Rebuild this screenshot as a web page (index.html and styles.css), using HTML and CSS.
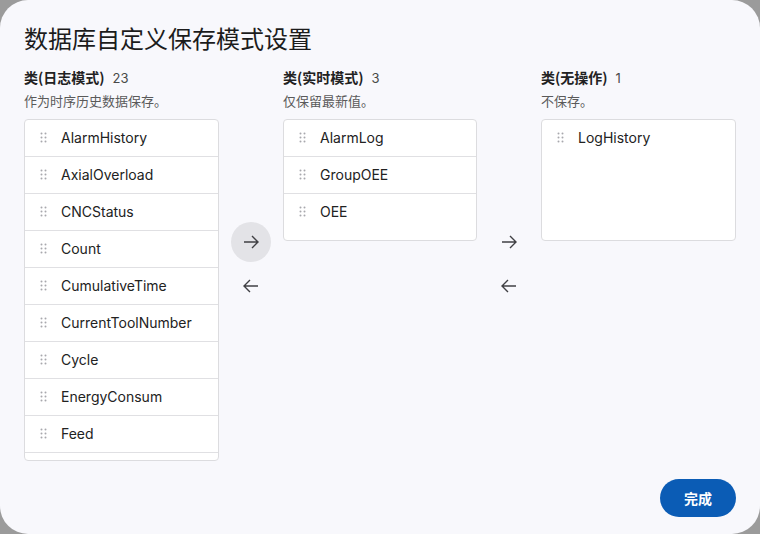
FILE: index.html
```html
<!DOCTYPE html>
<html lang="zh">
<head>
<meta charset="utf-8">
<title>数据库自定义保存模式设置</title>
<link rel="stylesheet" href="styles.css">
</head>
<body>
<div class="dialog">
  <h1 class="title">数据库自定义保存模式设置</h1>
  <div class="columns">
    <section class="col col-first">
      <div class="col-head"><span class="col-name">类(日志模式)</span><span class="col-count">23</span></div>
      <div class="col-desc">作为时序历史数据保存。</div>
      <ul class="list list-scroll">
        <li class="item"><svg class="grip" viewBox="0 0 7 11"><circle cx="1.5" cy="1.5" r="1"/><circle cx="5.5" cy="1.5" r="1"/><circle cx="1.5" cy="5.5" r="1"/><circle cx="5.5" cy="5.5" r="1"/><circle cx="1.5" cy="9.5" r="1"/><circle cx="5.5" cy="9.5" r="1"/></svg><span>AlarmHistory</span></li>
        <li class="item"><svg class="grip" viewBox="0 0 7 11"><circle cx="1.5" cy="1.5" r="1"/><circle cx="5.5" cy="1.5" r="1"/><circle cx="1.5" cy="5.5" r="1"/><circle cx="5.5" cy="5.5" r="1"/><circle cx="1.5" cy="9.5" r="1"/><circle cx="5.5" cy="9.5" r="1"/></svg><span>AxialOverload</span></li>
        <li class="item"><svg class="grip" viewBox="0 0 7 11"><circle cx="1.5" cy="1.5" r="1"/><circle cx="5.5" cy="1.5" r="1"/><circle cx="1.5" cy="5.5" r="1"/><circle cx="5.5" cy="5.5" r="1"/><circle cx="1.5" cy="9.5" r="1"/><circle cx="5.5" cy="9.5" r="1"/></svg><span>CNCStatus</span></li>
        <li class="item"><svg class="grip" viewBox="0 0 7 11"><circle cx="1.5" cy="1.5" r="1"/><circle cx="5.5" cy="1.5" r="1"/><circle cx="1.5" cy="5.5" r="1"/><circle cx="5.5" cy="5.5" r="1"/><circle cx="1.5" cy="9.5" r="1"/><circle cx="5.5" cy="9.5" r="1"/></svg><span>Count</span></li>
        <li class="item"><svg class="grip" viewBox="0 0 7 11"><circle cx="1.5" cy="1.5" r="1"/><circle cx="5.5" cy="1.5" r="1"/><circle cx="1.5" cy="5.5" r="1"/><circle cx="5.5" cy="5.5" r="1"/><circle cx="1.5" cy="9.5" r="1"/><circle cx="5.5" cy="9.5" r="1"/></svg><span>CumulativeTime</span></li>
        <li class="item"><svg class="grip" viewBox="0 0 7 11"><circle cx="1.5" cy="1.5" r="1"/><circle cx="5.5" cy="1.5" r="1"/><circle cx="1.5" cy="5.5" r="1"/><circle cx="5.5" cy="5.5" r="1"/><circle cx="1.5" cy="9.5" r="1"/><circle cx="5.5" cy="9.5" r="1"/></svg><span>CurrentToolNumber</span></li>
        <li class="item"><svg class="grip" viewBox="0 0 7 11"><circle cx="1.5" cy="1.5" r="1"/><circle cx="5.5" cy="1.5" r="1"/><circle cx="1.5" cy="5.5" r="1"/><circle cx="5.5" cy="5.5" r="1"/><circle cx="1.5" cy="9.5" r="1"/><circle cx="5.5" cy="9.5" r="1"/></svg><span>Cycle</span></li>
        <li class="item"><svg class="grip" viewBox="0 0 7 11"><circle cx="1.5" cy="1.5" r="1"/><circle cx="5.5" cy="1.5" r="1"/><circle cx="1.5" cy="5.5" r="1"/><circle cx="5.5" cy="5.5" r="1"/><circle cx="1.5" cy="9.5" r="1"/><circle cx="5.5" cy="9.5" r="1"/></svg><span>EnergyConsum</span></li>
        <li class="item"><svg class="grip" viewBox="0 0 7 11"><circle cx="1.5" cy="1.5" r="1"/><circle cx="5.5" cy="1.5" r="1"/><circle cx="1.5" cy="5.5" r="1"/><circle cx="5.5" cy="5.5" r="1"/><circle cx="1.5" cy="9.5" r="1"/><circle cx="5.5" cy="9.5" r="1"/></svg><span>Feed</span></li>
        <li class="item item-clipped"></li>
      </ul>
    </section>
    <div class="arrows">
      <button class="arrow arrow-active" aria-label="move right"><svg viewBox="0 0 18 18"><path d="M2 9H16M10 3L16 9L10 15"/></svg></button>
      <button class="arrow" aria-label="move left"><svg viewBox="0 0 18 18"><path d="M16 9H2M8 3L2 9L8 15"/></svg></button>
    </div>
    <section class="col">
      <div class="col-head"><span class="col-name">类(实时模式)</span><span class="col-count">3</span></div>
      <div class="col-desc">仅保留最新值。</div>
      <ul class="list">
        <li class="item"><svg class="grip" viewBox="0 0 7 11"><circle cx="1.5" cy="1.5" r="1"/><circle cx="5.5" cy="1.5" r="1"/><circle cx="1.5" cy="5.5" r="1"/><circle cx="5.5" cy="5.5" r="1"/><circle cx="1.5" cy="9.5" r="1"/><circle cx="5.5" cy="9.5" r="1"/></svg><span>AlarmLog</span></li>
        <li class="item"><svg class="grip" viewBox="0 0 7 11"><circle cx="1.5" cy="1.5" r="1"/><circle cx="5.5" cy="1.5" r="1"/><circle cx="1.5" cy="5.5" r="1"/><circle cx="5.5" cy="5.5" r="1"/><circle cx="1.5" cy="9.5" r="1"/><circle cx="5.5" cy="9.5" r="1"/></svg><span>GroupOEE</span></li>
        <li class="item item-last"><svg class="grip" viewBox="0 0 7 11"><circle cx="1.5" cy="1.5" r="1"/><circle cx="5.5" cy="1.5" r="1"/><circle cx="1.5" cy="5.5" r="1"/><circle cx="5.5" cy="5.5" r="1"/><circle cx="1.5" cy="9.5" r="1"/><circle cx="5.5" cy="9.5" r="1"/></svg><span>OEE</span></li>
      </ul>
    </section>
    <div class="arrows">
      <button class="arrow" aria-label="move right"><svg viewBox="0 0 18 18"><path d="M2 9H16M10 3L16 9L10 15"/></svg></button>
      <button class="arrow" aria-label="move left"><svg viewBox="0 0 18 18"><path d="M16 9H2M8 3L2 9L8 15"/></svg></button>
    </div>
    <section class="col col-last">
      <div class="col-head"><span class="col-name">类(无操作)</span><span class="col-count">1</span></div>
      <div class="col-desc">不保存。</div>
      <ul class="list">
        <li class="item item-last"><svg class="grip" viewBox="0 0 7 11"><circle cx="1.5" cy="1.5" r="1"/><circle cx="5.5" cy="1.5" r="1"/><circle cx="1.5" cy="5.5" r="1"/><circle cx="5.5" cy="5.5" r="1"/><circle cx="1.5" cy="9.5" r="1"/><circle cx="5.5" cy="9.5" r="1"/></svg><span>LogHistory</span></li>
      </ul>
    </section>
  </div>
  <div class="footer">
    <button class="done">完成</button>
  </div>
</div>
</body>
</html>
```

FILE: styles.css
```css
* { box-sizing: border-box; }
html, body {
  margin: 0;
  padding: 0;
  background: #9b9b9b;
}
body {
  font-family: "Inter", "Noto Sans CJK SC", sans-serif;
  color: #1f1f1f;
}
.dialog {
  width: 760px;
  height: 534px;
  background: #f8f8fc;
  border-radius: 28px;
  display: flex;
  flex-direction: column;
  padding: 22px 24px 17px 24px;
  overflow: hidden;
}
.title {
  margin: 0;
  font-family: "Noto Sans CJK SC", sans-serif;
  font-size: 24px;
  line-height: 32px;
  font-weight: 400;
  color: #1c1c1c;
}
.columns {
  display: flex;
  margin-top: 13px;
}
.col {
  width: 194px;
  flex: none;
  display: flex;
  flex-direction: column;
}
.col-first, .col-last { width: 195px; }
.col-head {
  display: flex;
  align-items: baseline;
  gap: 8px;
  height: 20px;
  line-height: 20px;
}
.col-name {
  font-family: "Noto Sans CJK SC", sans-serif;
  font-size: 14px;
  font-weight: 700;
  color: #222;
}
.col-count {
  font-size: 13px;
  color: #484848;
}
.col-desc {
  margin-top: 4px;
  font-family: "Noto Sans CJK SC", sans-serif;
  font-size: 13px;
  line-height: 20px;
  color: #5a5a5a;
}
.list {
  list-style: none;
  margin: 8px 0 0 0;
  padding: 0;
  background: #fff;
  border: 1px solid #dcdcdf;
  border-radius: 4px;
  min-height: 122px;
}
.list-scroll {
  height: 342px;
  overflow: hidden;
}
.item {
  display: flex;
  align-items: center;
  height: 37px;
  padding-left: 15px;
  padding-bottom: 1px;
  border-bottom: 1px solid #e0e0e3;
  font-size: 14px;
  color: #222;
}
.item-last { border-bottom: none; height: 36px; }
.grip {
  width: 7px;
  height: 11px;
  fill: #a8a8ad;
  margin-right: 14px;
  flex: none;
}
.arrows {
  width: 64px;
  flex: none;
  display: flex;
  flex-direction: column;
  align-items: center;
  justify-content: center;
  gap: 4px;
}
.arrow {
  width: 40px;
  height: 40px;
  border: none;
  border-radius: 50%;
  background: transparent;
  padding: 0;
  display: flex;
  align-items: center;
  justify-content: center;
}
.arrow-active { background: #e3e3e7; }
.arrow svg {
  width: 18px;
  height: 18px;
  fill: none;
  stroke: #404044;
  stroke-width: 1.4;
}
.footer {
  margin-top: auto;
  display: flex;
  justify-content: flex-end;
}
.done {
  width: 76px;
  height: 38px;
  border: none;
  border-radius: 19px;
  background: #0b5cb5;
  color: #fff;
  font-family: "Noto Sans CJK SC", sans-serif;
  font-size: 14px;
  font-weight: 700;
}
```
